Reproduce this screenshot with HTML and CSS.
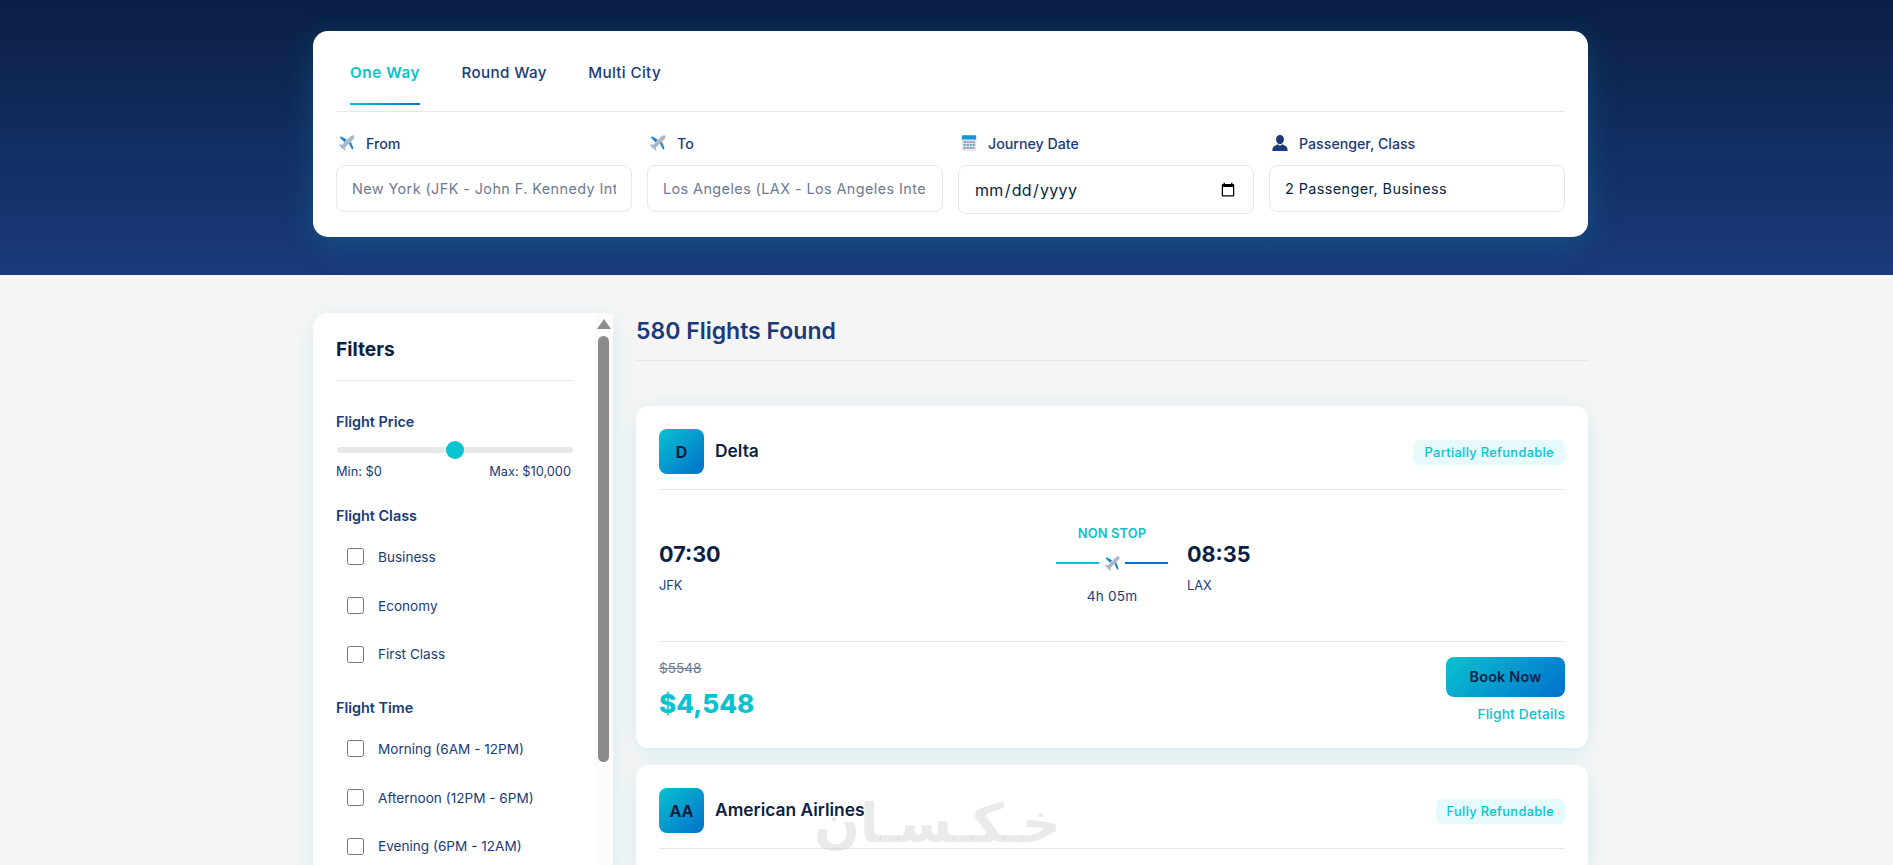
FILE: index.html
```html
<!DOCTYPE html>
<html lang="en">
<head>
  <meta charset="UTF-8" />
  <title>Flight Search</title>
  <meta name="viewport" content="width=device-width, initial-scale=1" />
  <link rel="stylesheet" href="styles.css">
</head>
<body>
  <svg class="defs" width="0" height="0">
    <defs>
      <linearGradient id="planeBlue" x1="0" y1="0" x2="1" y2="1">
        <stop offset="0" stop-color="#29a3e0"/>
        <stop offset="1" stop-color="#0f6fc4"/>
      </linearGradient>
      <symbol id="plane" viewBox="0 0 20 20">
        <path d="M9.6 6.2 3.4 2.6 1.8 4 7.2 9.2Z" fill="url(#planeBlue)"/>
        <path d="M11.8 10.4 15.8 17.4 17.2 15.8 14.2 8.2Z" fill="url(#planeBlue)"/>
        <path d="M17.8 1.6C16.6 1 15 1.6 13.8 2.8L4.6 12 2 11.4 1 12.4 3.6 14.4 3 15.4 4 16.2 5.2 15.8 7.2 18.6 8.2 17.6 7.6 15 17 5.8C18.2 4.6 18.6 2.8 17.8 1.6Z" fill="#a9b6c9"/>
      </symbol>
    </defs>
  </svg>

  <header class="hero">
    <div class="wrap">
      <div class="search-card">
        <div class="tabs">
          <a class="tab active">One Way</a>
          <a class="tab">Round Way</a>
          <a class="tab">Multi City</a>
        </div>
        <div class="fields">
          <div class="field">
            <label><svg class="ico"><use href="#plane"/></svg>From</label>
            <input type="text" placeholder="New York (JFK - John F. Kennedy International)">
          </div>
          <div class="field">
            <label><svg class="ico"><use href="#plane"/></svg>To</label>
            <input type="text" placeholder="Los Angeles (LAX - Los Angeles International)">
          </div>
          <div class="field">
            <label>
              <svg class="ico" viewBox="0 0 20 20">
                <rect x="2" y="1.5" width="16" height="17" rx="1.5" fill="#dfe4ec"/>
                <path d="M2 6V3a1.5 1.5 0 0 1 1.5-1.5h13A1.5 1.5 0 0 1 18 3v3Z" fill="#1b93d6"/>
                <g fill="#8593a8">
                  <rect x="4" y="8" width="2.4" height="2"/><rect x="7.4" y="8" width="2.4" height="2"/><rect x="10.8" y="8" width="2.4" height="2"/><rect x="14" y="8" width="2.2" height="2"/>
                  <rect x="4" y="11.2" width="2.4" height="2"/><rect x="7.4" y="11.2" width="2.4" height="2"/><rect x="14" y="11.2" width="2.2" height="2"/>
                  <rect x="4" y="14.4" width="2.4" height="2"/><rect x="7.4" y="14.4" width="2.4" height="2"/><rect x="10.8" y="14.4" width="2.4" height="2"/><rect x="14" y="14.4" width="2.2" height="2"/>
                </g>
                <rect x="10.8" y="11.2" width="2.4" height="2" fill="#1cc3d6"/>
              </svg>
              Journey Date
            </label>
            <input class="date-input" type="date">
          </div>
          <div class="field">
            <label>
              <svg class="ico" viewBox="0 0 20 20">
                <path d="M10 1.2c2.7 0 4.4 2 4.4 4.7 0 2.8-1.8 5.4-4.4 5.4S5.6 8.7 5.6 5.9c0-2.7 1.7-4.7 4.4-4.7Z" fill="#1a3a78"/>
                <path d="M7.4 11.4 10 13l2.6-1.6 4.4 2.5c.9.6 1.4 2.6 1.6 4.9H1.4c.2-2.3.7-4.3 1.6-4.9Z" fill="#1a3a78"/>
              </svg>
              Passenger, Class
            </label>
            <input class="filled" type="text" value="2 Passenger, Business">
          </div>
        </div>
      </div>
    </div>
  </header>

  <div class="wrap layout">
    <aside class="sidebar">
      <div class="filters">
        <h3 class="filters-title">Filters</h3>

        <h4 class="filter-head first">Flight Price</h4>
        <div class="slider"><span class="slider-thumb"></span></div>
        <div class="slider-labels"><span>Min: $0</span><span>Max: $10,000</span></div>

        <h4 class="filter-head">Flight Class</h4>
        <div class="check-list">
          <label class="check"><span class="box"></span>Business</label>
          <label class="check"><span class="box"></span>Economy</label>
          <label class="check"><span class="box"></span>First Class</label>
        </div>

        <h4 class="filter-head flight-time">Flight Time</h4>
        <div class="check-list">
          <label class="check"><span class="box"></span>Morning (6AM - 12PM)</label>
          <label class="check"><span class="box"></span>Afternoon (12PM - 6PM)</label>
          <label class="check"><span class="box"></span>Evening (6PM - 12AM)</label>
        </div>
      </div>
      <div class="scrollbar">
        <span class="scroll-arrow"></span>
        <span class="scroll-thumb"></span>
      </div>
    </aside>

    <main class="results">
      <h2 class="results-title">580 Flights Found</h2>

      <article class="flight-card">
        <div class="flight-head">
          <div class="airline">
            <span class="airline-logo">D</span>
            <span class="airline-name">Delta</span>
          </div>
          <span class="badge">Partially Refundable</span>
        </div>
        <div class="flight-body">
          <div class="stop-point">
            <div class="clock">07:30</div>
            <div class="code">JFK</div>
          </div>
          <div class="route">
            <div class="route-type">NON STOP</div>
            <div class="route-line">
              <span class="line-a"></span>
              <svg class="route-plane"><use href="#plane"/></svg>
              <span class="line-b"></span>
            </div>
            <div class="route-time">4h 05m</div>
          </div>
          <div class="stop-point">
            <div class="clock">08:35</div>
            <div class="code">LAX</div>
          </div>
        </div>
        <div class="flight-foot">
          <div>
            <div class="old-price">$5548</div>
            <div class="price">$4,548</div>
          </div>
          <div class="actions">
            <button class="book-btn">Book Now</button>
            <a class="details-link">Flight Details</a>
          </div>
        </div>
      </article>

      <article class="flight-card">
        <div class="flight-head">
          <div class="airline">
            <span class="airline-logo">AA</span>
            <span class="airline-name">American Airlines</span>
          </div>
          <span class="badge">Fully Refundable</span>
        </div>
      </article>
    </main>
  </div>

  <div class="watermark" lang="fa" dir="rtl">خـکـسـان</div>
</body>
</html>
```

FILE: styles.css
```css
* {
  box-sizing: border-box;
}
html, body {
  height: 100%;
}
body {
  margin: 0;
  height: 865px;
  overflow: hidden;
  font-family: 'Inter', 'Noto Sans', sans-serif;
  background: #f5f5f5;
  color: #0a1f44;
  position: relative;
}
.defs {
  position: absolute;
}
.wrap {
  width: 1275px;
  margin-left: 313px;
}

/* top search */
.hero {
  height: 275px;
  padding-top: 31px;
  background: linear-gradient(180deg, #0a1f44 0%, #1a3a7a 100%);
}
.search-card {
  background: white;
  border-radius: 15px;
  padding: 23px;
  box-shadow: 0 8px 32px rgba(11, 194, 208, 0.2);
}
.tabs {
  display: flex;
  gap: 41.5px;
  padding: 0 14px 6px;
  border-bottom: 1px solid #e8e8e8;
}
.tab {
  padding: 0 0 13px;
  font-size: 15.2px;
  font-weight: 500;
  letter-spacing: 0.35px;
  line-height: 38px;
  color: #1a3a7a;
}
.tab.active {
  color: #0bc2d0;
  font-weight: 600;
  letter-spacing: 0.6px;
  background: linear-gradient(90deg, #0bc2d0, #0070cc) no-repeat bottom / 100% 2px;
}
.fields {
  display: grid;
  grid-template-columns: repeat(4, 1fr);
  gap: 15px;
  align-items: start;
  margin-top: 19px;
}
.field label {
  display: flex;
  align-items: center;
  height: 24px;
  margin-bottom: 10px;
  font-size: 14.2px;
  font-weight: 500;
  color: #1a3a7a;
}
.ico {
  width: 18px;
  height: 18px;
  margin: 0 10px 0 2px;
}
.field input {
  display: block;
  width: 100%;
  height: 47px;
  padding: 0 15px;
  border: 1px solid #e8e8e8;
  border-radius: 8px;
  font-family: inherit;
  font-size: 14.4px;
  letter-spacing: 0.42px;
  color: #0a1f44;
  background: white;
}
.field input::placeholder {
  color: #6c7a93;
}
.field .date-input {
  height: 49px;
  font-size: 16px;
  letter-spacing: 0.3px;
}

/* main columns */
.layout {
  display: flex;
  gap: 23px;
  margin-top: 38px;
  align-items: flex-start;
}
.sidebar {
  display: flex;
  width: 300px;
  height: 620px;
  background: white;
  border-radius: 15px 0 0 0;
  box-shadow: 0 4px 20px rgba(11, 194, 208, 0.14);
  flex-shrink: 0;
}
.filters {
  flex: 1;
  padding: 21px 21px 0 23px;
}
.filters-title {
  margin: 0;
  padding-bottom: 16px;
  border-bottom: 1px solid #e8e8e8;
  font-size: 19.2px;
  font-weight: 700;
  line-height: 30px;
  color: #0a1f44;
}
.filter-head {
  margin: 24px 0 6px;
  font-size: 14.4px;
  font-weight: 600;
  line-height: 22px;
  color: #1a3a7a;
}
.filter-head.first {
  margin-top: 30px;
  margin-bottom: 14px;
}
.filter-head.flight-time {
  margin-top: 18px;
}
.slider {
  position: relative;
  height: 6px;
  margin-left: 1px;
  background: #e8e8e8;
  border-radius: 3px;
}
.slider-thumb {
  position: absolute;
  left: 109px;
  top: -6px;
  width: 18px;
  height: 18px;
  background: #0bc2d0;
  border-radius: 50%;
}
.slider-labels {
  display: flex;
  justify-content: space-between;
  margin-top: 10px;
  padding-right: 2px;
  font-size: 12.8px;
  line-height: 18px;
  color: #1a3a7a;
}
.check {
  display: flex;
  align-items: center;
  height: 48.7px;
  padding-left: 11px;
  padding-bottom: 1px;
  font-size: 13.6px;
  color: #1a3a7a;
}
.box {
  width: 17px;
  height: 17px;
  margin-right: 14px;
  border: 1px solid #767676;
  border-radius: 2.5px;
  background: white;
}
.scrollbar {
  width: 19px;
  display: flex;
  flex-direction: column;
  align-items: center;
  background: #fcfcfc;
}
.scroll-arrow {
  margin-top: 6px;
  border-left: 7px solid transparent;
  border-right: 7px solid transparent;
  border-bottom: 10px solid #8c8c8c;
}
.scroll-thumb {
  width: 11px;
  height: 426px;
  margin-top: 7px;
  background: #8c8c8c;
  border-radius: 6px;
}

/* results */
.results {
  flex: 1;
}
.results-title {
  margin: 0 0 45px;
  padding-bottom: 11px;
  border-bottom: 1px solid #e8e8e8;
  font-size: 23px;
  font-weight: 600;
  line-height: 36px;
  color: #1a3a7a;
}
.flight-card {
  background: white;
  border-radius: 12px;
  padding: 23px 23px 24px;
  margin-bottom: 17px;
  box-shadow: 0 4px 20px rgba(11, 194, 208, 0.14);
}
.flight-head {
  display: flex;
  justify-content: space-between;
  align-items: center;
  padding-bottom: 15px;
  border-bottom: 1px solid #e8e8e8;
}
.airline {
  display: flex;
  align-items: center;
  gap: 11px;
}
.airline-logo {
  display: flex;
  align-items: center;
  justify-content: center;
  width: 45px;
  height: 45px;
  background: linear-gradient(135deg, #0bc2d0, #0070cc);
  border-radius: 8px;
  font-size: 16px;
  font-weight: 700;
  color: #0a1f44;
}
.airline-name {
  margin-bottom: 2px;
  font-size: 17.4px;
  font-weight: 600;
  color: #0a1f44;
}
.badge {
  margin-top: 2px;
  padding: 0 11px;
  height: 25px;
  line-height: 25px;
  background: #e6f9fb;
  border-radius: 6px;
  font-size: 12.8px;
  font-weight: 500;
  letter-spacing: 0.35px;
  color: #0bc2d0;
}
.flight-body {
  display: grid;
  grid-template-columns: 1fr 112px 1fr;
  gap: 19px;
  padding: 34px 0 35px;
  border-bottom: 1px solid #e8e8e8;
}
.stop-point {
  padding-top: 14px;
}
.clock {
  font-size: 21.6px;
  font-weight: 700;
  line-height: 32px;
  color: #0a1f44;
}
.code {
  margin-top: 6px;
  font-size: 12.8px;
  line-height: 20px;
  color: #1a3a7a;
}
.route {
  text-align: center;
}
.route-type {
  font-size: 12.8px;
  font-weight: 600;
  letter-spacing: 0.2px;
  line-height: 20px;
  color: #0bc2d0;
}
.route-line {
  display: flex;
  align-items: center;
  justify-content: space-between;
  margin-top: 11px;
  height: 16px;
}
.line-a, .line-b {
  width: 43px;
  height: 2px;
  background: #0bc2d0;
}
.line-b {
  background: #0070cc;
}
.route-plane {
  width: 17px;
  height: 17px;
}
.route-time {
  margin-top: 15px;
  font-size: 13.6px;
  letter-spacing: 0.2px;
  line-height: 20px;
  color: #1a3a7a;
}
.flight-foot {
  display: flex;
  justify-content: space-between;
  padding-top: 16px;
}
.old-price {
  font-size: 13.6px;
  line-height: 20px;
  color: #6c7a93;
  text-decoration: line-through;
}
.price {
  margin-top: 8px;
  font-size: 26px;
  font-weight: 800;
  line-height: 36px;
  color: #0bc2d0;
}
.actions {
  display: flex;
  flex-direction: column;
  align-items: flex-end;
  margin-top: -1px;
}
.book-btn {
  width: 119px;
  height: 40px;
  padding-bottom: 2px;
  border: none;
  border-radius: 8px;
  background: linear-gradient(135deg, #0bc2d0, #0070cc);
  font-family: inherit;
  font-size: 14.4px;
  font-weight: 600;
  letter-spacing: 0.2px;
  color: #0a1f44;
}
.details-link {
  margin-top: 7px;
  font-size: 13.6px;
  font-weight: 500;
  letter-spacing: 0.25px;
  line-height: 20px;
  color: #0bc2d0;
}

/* site watermark over the page */
.watermark {
  position: absolute;
  left: 833px;
  top: 789px;
  width: 228px;
  font-family: 'DejaVu Sans', sans-serif;
  font-size: 54px;
  font-weight: 700;
  line-height: 70px;
  text-align: center;
  white-space: nowrap;
  color: rgba(205, 205, 205, 0.42);
}
```
